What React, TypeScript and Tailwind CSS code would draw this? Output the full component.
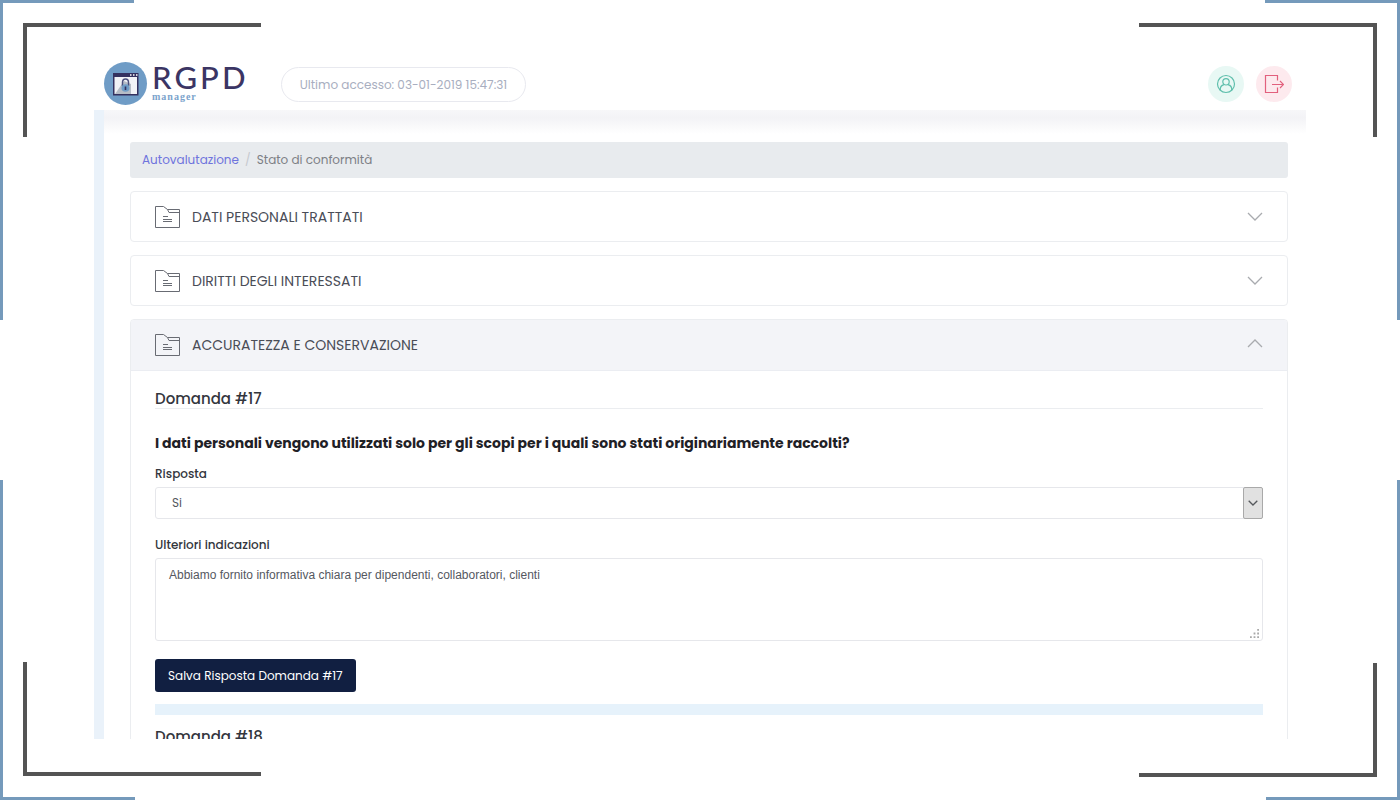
import { useState } from "react";
import type { ReactNode } from "react";

const FolderIcon = () => (
  <svg
    aria-hidden
    viewBox="0 0 25 24"
    className="h-6 w-[25px] shrink-0"
    fill="none"
    stroke="#686b73"
    strokeWidth="1"
  >
    <path d="M.5 22.500V1.500H8.500L12.500 4.500H24.500V22.500Z" />
    <path d="M12.500 4.500L14 7.500H24.500" />
    <path d="M8 11.500H13M8 14.500H17M8 16.500H17" />
  </svg>
);

const Chevron = ({ up }: { up?: boolean }) => (
  <svg
    aria-hidden
    viewBox="0 0 16 16"
    className="h-4 w-4 shrink-0"
    fill="none"
    stroke="#a9abaf"
    strokeWidth="1.300"
  >
    <path d={up ? "M1 10L8 3L15 10" : "M1 4L8 11L15 4"} />
  </svg>
);

const Logo = () => (
  <a href="#" aria-label="RGPD manager" className="flex items-center gap-1">
    <svg aria-hidden viewBox="0 0 44 44" className="h-11 w-11">
      <circle cx="21.500" cy="21.500" r="21.500" fill="#6f9cc6" />
      <path d="M9 11H34.500V33.500H9Z" fill="#34315f" />
      <path d="M10.500 15H33V32H10.500Z" fill="#f1f2f6" />
      <path d="M11 32L20 19L27 22V32H11Z" fill="#b6bcc6" />
      <path d="M26 13H27.500M29 13H30.500M32 13H33.500" stroke="#fff" strokeWidth="1.300" />
      <path
        d="M18.500 24V20.500A3 3.500 0 0 1 24.500 20.500V24"
        fill="none"
        stroke="#4b4f7c"
        strokeWidth="1.500"
      />
      <ellipse cx="21.500" cy="26" rx="4" ry="3.800" fill="#6f9cc6" />
      <path d="M21.500 24.500V28" stroke="#34315f" strokeWidth="1.600" />
    </svg>
    <span className="flex flex-col pb-1">
      <span className="font-['Lato'] text-[31px] leading-[29px] font-medium tracking-widest text-[#3b3564]">
        RGPD
      </span>
      <span className="font-['Liberation_Serif'] text-[10px] leading-[9px] font-bold tracking-widest text-[#7ba3cc]">
        manager
      </span>
    </span>
  </a>
);

type PanelProps = {
  title: string;
  open: boolean;
  onToggle: () => void;
  children?: ReactNode;
};

const Panel = ({ title, open, onToggle, children }: PanelProps) => (
  <section className="overflow-hidden rounded-[4px] border border-[#ebedf0]">
    <button
      type="button"
      aria-expanded={open}
      onClick={onToggle}
      className={
        open
          ? "flex h-[51px] w-full items-center gap-3 border-b border-[#ebedf2] bg-[#f3f4f8] px-6 text-left"
          : "flex h-[49px] w-full items-center gap-3 px-6 text-left"
      }
    >
      <FolderIcon />
      <span className="flex-1 text-sm text-[#4a4d57]">{title}</span>
      <Chevron up={open} />
    </button>
    {open && <div className="px-6">{children}</div>}
  </section>
);

const QuestionTitle = ({ n }: { n: number }) => (
  <h2 className="border-b border-[#ebedf0] text-[15px] leading-[18px] font-medium text-[#33363d]">
    Domanda #{n}
  </h2>
);

const Corners = () => (
  <div aria-hidden className="pointer-events-none">
    <div className="absolute top-0 left-0 h-80 w-[134px] border-t-[3px] border-l-[3px] border-[#759abb]" />
    <div className="absolute top-0 right-0 h-80 w-[135px] border-t-[3px] border-r-[3px] border-[#759abb]" />
    <div className="absolute bottom-0 left-0 h-80 w-[135px] border-b-[3px] border-l-[3px] border-[#759abb]" />
    <div className="absolute right-0 bottom-0 h-80 w-[134px] border-r-[3px] border-b-[3px] border-[#759abb]" />
    <div className="absolute top-[23px] left-[23px] h-[114px] w-[238px] border-t-4 border-l-4 border-[#545454]" />
    <div className="absolute top-[23px] right-[23px] h-[114px] w-[238px] border-t-4 border-r-4 border-[#545454]" />
    <div className="absolute bottom-6 left-[23px] h-[114px] w-[238px] border-b-4 border-l-4 border-[#545454]" />
    <div className="absolute right-[23px] bottom-[23px] h-[114px] w-[238px] border-r-4 border-b-4 border-[#545454]" />
  </div>
);

const App = () => {
  const [openPanel, setOpenPanel] = useState(2);
  const toggle = (i: number) => setOpenPanel(openPanel === i ? -1 : i);

  return (
    <div className="relative flex h-screen flex-col bg-white px-[94px] pt-[58px] pb-[61px] font-['Poppins','Inter',sans-serif] text-[#33363d]">
      <Corners />

      <header className="flex h-[52px] shrink-0 items-center gap-8 pr-[14px] pl-[10px]">
        <Logo />
        <span className="rounded-full border border-[#e8e9ef] px-[18px] py-2 text-xs leading-[17px] text-[#a8aec0]">
          Ultimo accesso: 03-01-2019 15:47:31
        </span>
        <div className="ml-auto flex gap-3">
          <button
            type="button"
            aria-label="Profilo"
            className="flex h-9 w-9 items-center justify-center rounded-full bg-[#e8f8f4]"
          >
            <svg
              aria-hidden
              viewBox="0 0 20 20"
              className="h-5 w-5"
              fill="none"
              stroke="#5fbfac"
              strokeWidth="1.200"
            >
              <circle cx="10" cy="10" r="8.500" />
              <circle cx="10" cy="7.800" r="3.200" />
              <path d="M8 10.600C5.500 11.200 4 13 4.300 16.200M12 10.600C14.500 11.200 16 13 15.700 16.200" />
            </svg>
          </button>
          <button
            type="button"
            aria-label="Esci"
            className="flex h-9 w-9 items-center justify-center rounded-full bg-[#fdeaee]"
          >
            <svg
              aria-hidden
              viewBox="0 0 20 20"
              className="h-5 w-5"
              fill="none"
              stroke="#e2607d"
              strokeWidth="1.200"
            >
              <path d="M13.500 6.500V1.500H1.500V18.500H13.500V13.500" />
              <path d="M8 10.500H18.500M16 7L19.500 10.500L16 14" />
            </svg>
          </button>
        </div>
      </header>

      <main className="min-h-0 flex-1 overflow-hidden border-l-[10px] border-[#eaf2fa]">
        <div className="h-8 bg-linear-to-b from-[#f7f7f9] via-[#f3f3f6] via-25% to-white to-75%" />
        <div className="flex flex-col gap-[13px] pr-[18px] pl-[26px]">
          <nav
            aria-label="Breadcrumb"
            className="flex h-9 items-center gap-[6px] rounded-[3px] bg-[#e8ebee] px-3 text-xs"
          >
            <a href="#" className="text-[#6f74dd]">
              Autovalutazione
            </a>
            <span className="text-[#c6c9cf]">/</span>
            <span className="text-[#7d8085]">Stato di conformità</span>
          </nav>

          <Panel
            title="DATI PERSONALI TRATTATI"
            open={openPanel === 0}
            onToggle={() => toggle(0)}
          />
          <Panel
            title="DIRITTI DEGLI INTERESSATI"
            open={openPanel === 1}
            onToggle={() => toggle(1)}
          />
          <Panel
            title="ACCURATEZZA E CONSERVAZIONE"
            open={openPanel === 2}
            onToggle={() => toggle(2)}
          >
            <form className="flex flex-col pt-[19px]" onSubmit={(e) => e.preventDefault()}>
              <QuestionTitle n={17} />
              <p className="mt-6 text-sm leading-5 font-bold text-[#1f2126]">
                I dati personali vengono utilizzati solo per gli scopi per i quali sono stati
                originariamente raccolti?
              </p>

              <label htmlFor="risposta" className="mt-[13px] text-xs leading-4 font-medium">
                Risposta
              </label>
              <div className="relative mt-[5px]">
                <select
                  id="risposta"
                  defaultValue="Si"
                  className="block h-8 w-full appearance-none rounded-[3px] border border-[#e6e7eb] bg-white px-4 text-xs text-[#55585f]"
                >
                  <option>Si</option>
                  <option>No</option>
                </select>
                <span className="pointer-events-none absolute top-0 right-0 flex h-8 w-5 items-center justify-center rounded-[2px] border border-[#a9a9a9] bg-[#e1e1e1]">
                  <svg
                    aria-hidden
                    viewBox="0 0 10 6"
                    className="h-[6px] w-[10px]"
                    fill="none"
                    stroke="#55585c"
                    strokeWidth="1.300"
                  >
                    <path d="M.7 .7L5 5L9.300 .7" />
                  </svg>
                </span>
              </div>

              <label htmlFor="indicazioni" className="mt-[18px] text-xs leading-4 font-medium">
                Ulteriori indicazioni
              </label>
              <div className="relative mt-[5px]">
                <textarea
                  id="indicazioni"
                  defaultValue="Abbiamo fornito informativa chiara per dipendenti, collaboratori, clienti"
                  className="block h-[83px] w-full resize-none rounded-[3px] border border-[#e6e7eb] px-[13px] py-[7px] font-['Liberation_Sans'] text-xs leading-[18px] text-[#55585f]"
                />
                <svg
                  aria-hidden
                  viewBox="0 0 10 10"
                  className="pointer-events-none absolute right-1 bottom-[3px] h-[9px] w-[9px]"
                  fill="#a9a9a9"
                >
                  <path d="M8 0h2v2H8zM8 4h2v2H8zM4 4h2v2H4zM8 8h2v2H8zM4 8h2v2H4zM0 8h2v2H0z" />
                </svg>
              </div>

              <button
                type="submit"
                className="mt-[18px] h-[33px] self-start rounded-[3px] bg-[#111f41] px-[13px] text-xs text-white"
              >
                Salva Risposta Domanda #17
              </button>
              <hr className="mt-3 mb-[13px] h-[11px] border-0 bg-[#e6f2fb]" />
              <QuestionTitle n={18} />
            </form>
          </Panel>
        </div>
      </main>
    </div>
  );
};

export default App;
